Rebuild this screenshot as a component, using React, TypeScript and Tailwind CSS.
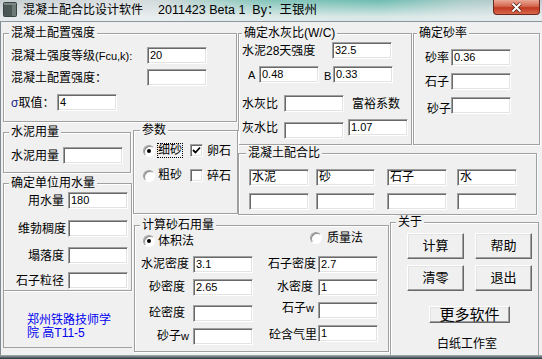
import type { ReactNode } from 'react';

const sunken =
  'border border-t-[#a0a0a0] border-l-[#a0a0a0] border-b-white border-r-white shadow-[inset_1px_1px_0_#696969,inset_-1px_-1px_0_#e3e3e3]';
const raised =
  'border border-t-white border-l-white border-b-[#696969] border-r-[#696969] shadow-[inset_-1px_-1px_0_#a0a0a0,inset_1px_1px_0_#e3e3e3]';
const etched = 'border border-[#a0a0a0] shadow-[inset_1px_1px_0_#fff,1px_1px_0_#fff]';

const Group = ({
  title,
  className = '',
  titleClass = 'left-[5px]',
  frame = etched,
  children,
}: {
  title: string;
  className?: string;
  titleClass?: string;
  frame?: string;
  children?: ReactNode;
}) => (
  <div className={`relative ${frame} ${className}`}>
    <span className={`absolute -top-[8px] whitespace-nowrap bg-[#f0f0f0] px-[2px] leading-[14px] ${titleClass}`}>{title}</span>
    {children}
  </div>
);

const Field = ({ value = '', w = 'w-[60px]', cls = '', cjk = false }: { value?: string; w?: string; cls?: string; cjk?: boolean }) => (
  <div
    className={`h-[17px] shrink-0 overflow-hidden whitespace-nowrap bg-white pl-[2px] leading-[15px] ${cjk ? 'text-[12px]' : 'text-[11px]'} ${w} ${sunken} ${cls}`}
  >
    {value}
  </div>
);

const Radio = ({ checked = false }: { checked?: boolean }) => (
  <span className="flex h-[12px] w-[12px] shrink-0 items-center justify-center rounded-full border border-t-[#a0a0a0] border-l-[#a0a0a0] border-b-white border-r-white bg-white shadow-[inset_1px_1px_0_#8a8a8a]">
    {checked && <span className="h-[4px] w-[4px] rounded-full bg-black" />}
  </span>
);

const Check = ({ checked = false }: { checked?: boolean }) => (
  <span className={`ml-[7px] flex h-[13px] w-[13px] shrink-0 items-center justify-center bg-white ${sunken}`}>
    {checked && (
      <svg width="9" height="9" viewBox="0 0 9 9">
        <polyline points="1,4 3.5,6.5 8,1.5" fill="none" stroke="#000" strokeWidth="1.8" />
      </svg>
    )}
  </span>
);

const Btn = ({ label, cls = '' }: { label: string; cls?: string }) => (
  <button type="button" className={`flex h-[26px] w-[57px] items-center justify-center bg-[#f0f0f0] text-[13px] ${raised} ${cls}`}>
    {label}
  </button>
);

export default function App() {
  return (
    <div className="flex h-[359px] w-[542px] flex-col overflow-hidden bg-[#f0f0f0] font-['Liberation_Sans','Noto_Sans_CJK_SC',sans-serif] text-[12px] leading-[14px] text-black">
      {/* title bar */}
      <div className="flex h-[22px] shrink-0 items-start border-b border-[#8a979f] bg-[linear-gradient(to_bottom,rgba(236,240,241,0)_0%,rgba(236,240,241,0.85)_80%),linear-gradient(to_right,#c3cbcf_0%,#d9dee0_20%,#cfd9d9_30%,#86c6bb_48%,#6dbcb0_70%,#a9cbc8_85%,#c4ccd0_100%)]">
        <svg className="ml-[3px] mt-[2px] shrink-0" width="14" height="15" viewBox="0 0 14 15">
          <rect x="0.5" y="0.5" width="13" height="14" rx="1" fill="#56625f" stroke="#3a4442" />
          <rect x="1" y="1" width="8" height="13" fill="#4b5755" />
          <rect x="9" y="1" width="4" height="13" fill="#6d7a77" />
          <rect x="1" y="1" width="12" height="2" fill="#7b8784" />
        </svg>
        <span className="ml-[6px] mt-[3px] text-[12px]">混凝土配合比设计软件</span>
        <span className="ml-[15px] mt-[3px] whitespace-pre text-[12.5px]">2011423 Beta 1  By：王银州</span>
        <div className="ml-auto mr-[2px] flex h-[15px] w-[47px] items-center justify-center rounded-b-[4px] border border-t-0 border-[#6b2a1f] bg-[linear-gradient(to_bottom,#eaa896_0%,#d4674f_45%,#c0391f_55%,#d8664b_100%)]">
          <svg width="13" height="11" viewBox="0 0 13 11">
            <path d="M2.5 1.5 L10.5 9.5 M10.5 1.5 L2.5 9.5" stroke="#4a1a12" strokeWidth="3.4" />
            <path d="M2.5 1.5 L10.5 9.5 M10.5 1.5 L2.5 9.5" stroke="#fff" strokeWidth="2" />
          </svg>
        </div>
      </div>

      {/* client area */}
      <div className="grid h-[333px] shrink-0 grid-cols-[130px_105px_151px_24px_129px] grid-rows-[108px_23px_69px_133px] border-l border-[#7f8c94] pl-[2px]">
        <Group title="混凝土配置强度" className="col-span-2 col-start-1 row-start-1 mt-[11px] h-[89px] w-[234px] self-start">
          <div className="flex flex-col pl-[7px] pt-[13px]">
            <div className="flex h-[17px] items-center">
              <span className="w-[136px] whitespace-nowrap">
                混凝土强度等级<span className="text-[11px]">(Fcu,k):</span>
              </span>
              <Field value="20" />
            </div>
            <div className="mt-[5px] flex h-[17px] items-center">
              <span className="w-[136px]">混凝土配置强度：</span>
              <Field />
            </div>
            <div className="mt-[8px] flex h-[17px] items-center">
              <span className="w-[46px] whitespace-nowrap">
                <span className="text-[#1c1c8c]">σ</span>取值：
              </span>
              <Field value="4" />
            </div>
          </div>
        </Group>

        <Group title="确定水灰比(W/C)" titleClass="left-[3px]" className="col-span-2 col-start-3 row-span-2 row-start-1 mt-[11px] h-[112px] w-[174px]">
          <div className="flex flex-col pl-[3px] pt-[8px]">
            <div className="flex h-[17px] items-center">
              <span className="w-[90px]">水泥28天强度</span>
              <Field value="32.5" />
            </div>
            <div className="mt-[7px] flex h-[17px] items-center">
              <span className="ml-[6px] w-[11px] text-[11px]">A</span>
              <Field value="0.48" />
              <span className="ml-[5px] mt-[3px] w-[9px] text-[11px]">B</span>
              <Field value="0.33" />
            </div>
            <div className="mt-[12px] flex h-[17px] items-center">
              <span className="w-[42px]">水灰比</span>
              <Field />
              <span className="ml-[8px]">富裕系数</span>
            </div>
            <div className="mt-[7px] flex items-start">
              <span className="mt-[2px] w-[42px]">灰水比</span>
              <Field cls="mt-[3px]" />
              <Field value="1.07" cls="ml-[4px]" />
            </div>
          </div>
        </Group>

        <Group title="确定砂率" titleClass="left-[3px]" className="col-start-5 row-span-2 row-start-1 mt-[11px] h-[112px] w-[127px]">
          <div className="flex flex-col pl-[11px] pt-[15px]">
            <div className="flex h-[17px] items-center">
              <span className="w-[26px]">砂率</span>
              <Field value="0.36" />
            </div>
            <div className="mt-[7px] flex h-[17px] items-center">
              <span className="w-[26px]">石子</span>
              <Field />
            </div>
            <div className="mt-[7px] flex items-start">
              <span className="ml-[2px] mt-[5px] w-[24px]">砂子</span>
              <Field />
            </div>
          </div>
        </Group>

        {/* left column */}
        <div className="col-start-1 row-span-3 row-start-2 flex flex-col">
          <Group title="水泥用量" className="mt-[2px] h-[41px] w-[128px] shrink-0">
            <div className="ml-[7px] mt-[14px] flex h-[17px] items-center">
              <span className="w-[52px]">水泥用量</span>
              <Field />
            </div>
          </Group>
          <Group title="确定单位用水量" className="mt-[10px] h-[108px] w-[129px] shrink-0">
            <div className="flex flex-col pt-[8px]">
              <div className="flex h-[17px] items-center">
                <span className="w-[64px] pr-[4px] text-right">用水量</span>
                <Field value="180" />
              </div>
              <div className="mt-[11px] flex h-[17px] items-center">
                <span className="w-[64px] pr-[2px] text-right">维勃稠度</span>
                <Field />
              </div>
              <div className="mt-[10px] flex h-[17px] items-center">
                <span className="w-[64px] pr-[4px] text-right">塌落度</span>
                <Field />
              </div>
              <div className="mt-[8px] flex h-[17px] items-center">
                <span className="w-[64px] pr-[4px] text-right">石子粒径</span>
                <Field />
              </div>
            </div>
          </Group>
          <div className="h-[57px] w-[129px] shrink-0 border-b border-l border-[#a0a0a0]">
            <p className="ml-[23px] mt-[23px] w-[90px] text-[12px] leading-[13px] text-[#0000f0]">郑州铁路技师学院 高T11-5</p>
          </div>
        </div>

        <Group title="参数" titleClass="left-[6px]" className="col-start-2 row-span-2 row-start-2 h-[84px] w-[105px]">
          <div className="flex flex-col pl-[9px] pt-[12px]">
            <div className="flex h-[15px] items-center">
              <Radio checked />
              <span className="ml-[2px] border border-dotted border-black leading-[13px]">细砂</span>
              <Check checked />
              <span className="ml-[4px]">卵石</span>
            </div>
            <div className="mt-[10px] flex h-[15px] items-center">
              <Radio />
              <span className="ml-[2px] border border-transparent leading-[13px]">粗砂</span>
              <Check />
              <span className="ml-[4px]">碎石</span>
            </div>
          </div>
        </Group>

        <Group title="混凝土配合比" titleClass="left-[7px]" className="col-span-3 col-start-3 row-start-3 h-[62px] w-[299px]">
          <div className="flex flex-col pl-[10px] pt-[15px]">
            <div className="flex">
              <Field value="水泥" cjk />
              <Field value="砂" cjk w="w-[59px]" cls="ml-[7px]" />
              <Field value="石子" cjk cls="ml-[12px]" />
              <Field value="水" cjk cls="ml-[10px]" />
            </div>
            <div className="mt-[7px] flex">
              <Field />
              <Field w="w-[59px]" cls="ml-[7px]" />
              <Field cls="ml-[12px]" />
              <Field cls="ml-[10px]" />
            </div>
          </div>
        </Group>

        <Group title="计算砂石用量" className="col-span-2 col-start-2 row-start-4 ml-[1px] mt-[3px] h-[127px] w-[255px]">
          <div className="flex flex-col">
            <div className="mt-[4px] flex h-[20px] items-start pl-[8px]">
              <div className="mt-[4px] flex items-center">
                <Radio checked />
                <span className="ml-[3px]">体积法</span>
              </div>
              <div className="ml-[116px] mt-[1px] flex items-center">
                <Radio />
                <span className="ml-[5px]">质量法</span>
              </div>
            </div>
            <div className="mt-[6px] flex h-[17px] items-center leading-[17px]">
              <span className="w-[58px] pr-[4px] text-right">水泥密度</span>
              <Field value="3.1" />
              <span className="w-[65px] pr-[2px] text-right">石子密度</span>
              <Field value="2.7" />
            </div>
            <div className="mt-[6px] flex h-[17px] items-center leading-[17px]">
              <span className="w-[58px] pr-[8px] text-right">砂密度</span>
              <Field value="2.65" />
              <span className="w-[65px] pr-[5px] text-right">水密度</span>
              <Field value="1" />
            </div>
            <div className="mt-[6px] flex h-[20px] items-start leading-[17px]">
              <span className="mt-[3px] w-[58px] pr-[8px] text-right">砼密度</span>
              <Field cls="mt-[3px]" />
              <span className="-mt-[2px] w-[65px] pr-[4px] text-right">
                石子<span className="text-[11px]">w</span>
              </span>
              <Field />
            </div>
            <div className="mt-[3px] flex h-[20px] items-start leading-[17px]">
              <span className="mt-[3px] w-[58px] pr-[4px] text-right">
                砂子<span className="text-[11px]">w</span>
              </span>
              <Field cls="mt-[3px]" />
              <span className="mt-[2px] w-[65px] pr-[1px] text-right">砼含气里</span>
              <Field value="1" />
            </div>
          </div>
        </Group>

        <Group
          title="关于"
          frame="border-x border-t border-[#a0a0a0] shadow-[inset_1px_1px_0_#fff]"
          className="col-span-2 col-start-4 row-start-4 ml-[1px] h-[133px] w-[149px]"
        >
          <div className="flex flex-col pl-[16px] pt-[10px]">
            <div className="flex">
              <Btn label="计算" />
              <Btn label="帮助" cls="ml-[11px]" />
            </div>
            <div className="mt-[6px] flex">
              <Btn label="清零" />
              <Btn label="退出" cls="ml-[11px]" />
            </div>
            <button
              type="button"
              className={`ml-[22px] mt-[15px] flex h-[17px] w-[81px] items-center justify-center self-start bg-[#f0f0f0] text-[15px] leading-[15px] ${raised}`}
            >
              更多软件
            </button>
            <span className="ml-[30px] mt-[14px] self-start">白纸工作室</span>
          </div>
        </Group>
      </div>

      <div className="h-[4px] shrink-0 bg-[linear-gradient(to_bottom,#a7b2b5,#27333a)]" />
    </div>
  );
}
